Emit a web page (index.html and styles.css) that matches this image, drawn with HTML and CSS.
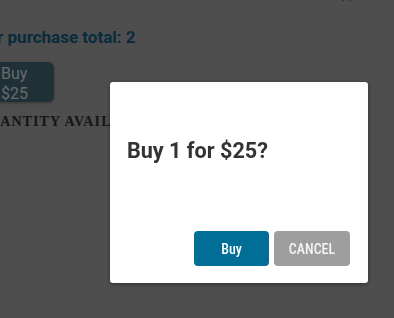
FILE: index.html
```html
<!DOCTYPE html>
<html lang="en">
<head>
    <meta charset="UTF-8">
    <meta name="viewport" content="width=device-width, initial-scale=1.0">
    <title>Shop</title>
    <link rel="stylesheet" href="styles.css">
</head>
<body>

    <div class="page">
        <h2 class="total">Your purchase total: 2</h2>
        <button class="buy-item">Buy<br>$25</button>
        <div class="quantity">Quantity available</div>
    </div>

    <div class="close-mark">&times;</div>

    <div class="overlay">
        <div class="dialog">
            <div class="dialog-title">Buy 1 for $25?</div>
            <div class="dialog-actions">
                <button class="button confirm">Buy</button>
                <button class="button cancel">Cancel</button>
            </div>
        </div>
    </div>

</body>
</html>
```

FILE: styles.css
```css
* {
    margin: 0;
    padding: 0;
    box-sizing: border-box;
}
body {
    font-family: Roboto, 'Noto Sans', sans-serif;
    background-color: #9c9c9c;
    overflow: hidden;
    height: 318px;
}
.page {
    margin-left: -34px;
    padding-top: 27px;
}
.total {
    margin-left: 2px;
    font-size: 17px;
    font-weight: 700;
    color: #12587a;
    line-height: 20px;
}
.buy-item {
    display: block;
    margin-top: 15px;
    margin-left: 25px;
    width: 63px;
    height: 40px;
    padding: 2px 0 0 10px;
    text-align: left;
    font-family: Roboto, sans-serif;
    font-size: 16px;
    line-height: 20px;
    color: #d0d4d8;
    background-color: #3e626e;
    border: none;
    border-radius: 6px;
    box-shadow: 0 1px 3px rgba(0, 0, 0, 0.3);
}
.quantity {
    margin-top: 12px;
    margin-left: 11px;
    font-family: 'Liberation Serif', serif;
    font-weight: 700;
    font-size: 14px;
    letter-spacing: 1.1px;
    text-transform: uppercase;
    color: #2a2a2a;
}
.close-mark {
    position: absolute;
    top: -17px;
    left: 341px;
    font-size: 22px;
    color: #000;
}
.overlay {
    position: fixed;
    inset: 0;
    background-color: rgba(0, 0, 0, 0.5);
}
.dialog {
    margin: 82px 0 0 110px;
    width: 258px;
    height: 201px;
    background-color: #fff;
    border-radius: 3px;
    box-shadow: 0 1px 4px rgba(0, 0, 0, 0.4);
    display: flex;
    flex-direction: column;
    justify-content: space-between;
    padding: 56px 18px 17px 17px;
}
.dialog-title {
    font-size: 21.6px;
    font-weight: 700;
    color: #333;
    line-height: 26px;
}
.dialog-actions {
    display: flex;
    justify-content: flex-end;
    gap: 5px;
}
.button {
    height: 35px;
    width: 75px;
    border: none;
    border-radius: 4px;
    color: #fff;
    font-family: 'Roboto Condensed', 'Liberation Sans Narrow', Roboto, sans-serif;
    font-size: 14px;
    font-weight: 500;
    cursor: pointer;
}
.button.confirm {
    background-color: #006e96;
}
.button.cancel {
    width: 76px;
    background-color: #9e9e9e;
    color: #f4f4f4;
    text-transform: uppercase;
}
```
